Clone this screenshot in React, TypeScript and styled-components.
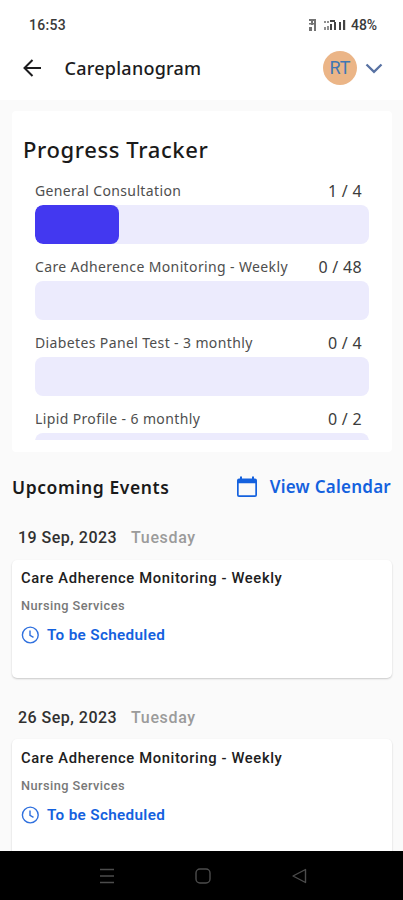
import React from "react";
import styled, { createGlobalStyle } from "styled-components";

const Global = createGlobalStyle`
  * { box-sizing: border-box; }
  html, body { margin: 0; padding: 0; }
  body { background: #fafafa; overflow: hidden; }
`;

const noto = `"Noto Sans", "Open Sans", sans-serif`;
const roboto = `Roboto, "Liberation Sans", sans-serif`;
const blue = "#1461de";

const Screen = styled.div`
  width: 403px;
  height: 900px;
  display: flex;
  flex-direction: column;
  background: #fafafa;
  overflow: hidden;
  font-family: ${noto};
  white-space: nowrap;
`;

const StatusBar = styled.div`
  flex: none;
  height: 50px;
  padding: 0 26px 0 29px;
  display: flex;
  align-items: center;
  justify-content: space-between;
  background: #fff;
  color: #3a3a3a;
  font: 500 14px/20px ${roboto};
`;

const Time = styled.span`
  letter-spacing: 0.3px;
`;

const StatusIcons = styled.div`
  display: flex;
  align-items: center;
  gap: 5px;
  letter-spacing: -0.1px;
`;

const Header = styled.header`
  flex: none;
  height: 50px;
  padding: 0 20px 14px 20px;
  display: flex;
  align-items: center;
  background: #fff;
`;

const Title = styled.h1`
  margin: 0 auto 0 19.5px;
  font: 500 18px/24px ${noto};
  letter-spacing: 0.25px;
  color: #1c1c1e;
`;

const Avatar = styled.div`
  width: 34px;
  height: 34px;
  margin-right: 8px;
  border-radius: 50%;
  display: flex;
  align-items: center;
  justify-content: center;
  background: #ebb587;
  color: #3f77b4;
  font: 400 18px/34px ${roboto};
`;

const TrackerCard = styled.section`
  flex: none;
  height: 341px;
  margin: 11px 11px 0 12px;
  padding: 23px 23px 12px 11px;
  display: flex;
  flex-direction: column;
  background: #fff;
  border-radius: 4px;
`;

const TrackerTitle = styled.h2`
  margin: 0;
  font: 500 22px/30px ${noto};
  letter-spacing: 0.6px;
  color: #1a1a1a;
`;

const TrackerList = styled.div`
  flex: 1;
  min-height: 0;
  padding-left: 12px;
  padding-top: 17px;
  overflow: hidden;
`;

const TrackerItem = styled.div`
  height: 76px;
`;

const TrackerLabel = styled.div`
  height: 24px;
  padding-right: 7px;
  display: flex;
  align-items: flex-start;
  justify-content: space-between;
  line-height: 20px;
`;

const ItemName = styled.span`
  font-size: 14px;
  letter-spacing: 0.37px;
  color: #4e4e4e;
`;

const ItemCount = styled.span`
  font-size: 16px;
  letter-spacing: 0.3px;
  color: #3c3c3c;
`;

const Track = styled.div`
  height: 39px;
  border-radius: 8px;
  background: #ecebfd;
  overflow: hidden;
`;

const Fill = styled.div`
  height: 100%;
  border-radius: 8px;
  background: #4338f0;
`;

const SectionBar = styled.div`
  flex: none;
  height: 34px;
  margin-top: 18px;
  padding: 0 12px;
  display: flex;
  align-items: center;
  justify-content: space-between;
`;

const SectionTitle = styled.h2`
  margin: 0;
  font: 600 17.5px/24px ${noto};
  letter-spacing: 0.6px;
  color: #1a1a1a;
`;

const CalendarLink = styled.a`
  display: flex;
  align-items: center;
  gap: 12px;
  font: 600 17px/24px ${noto};
  letter-spacing: 0.25px;
  color: ${blue};
`;

const Feed = styled.div`
  flex: 1;
  min-height: 0;
  overflow: hidden;
`;

const EventGroup = styled.section`
  height: 179.6px;
  padding: 23px 11px 0 12px;
`;

const DateRow = styled.div`
  height: 32.8px;
  padding-left: 6px;
  display: flex;
  gap: 14px;
  font: 500 16px/22px ${roboto};
  letter-spacing: 0.48px;
  color: #303030;
`;

const Weekday = styled.span`
  letter-spacing: 0.65px;
  color: #9b9b9b;
`;

const EventCard = styled.article`
  height: 118.4px;
  padding: 8.2px 9px 0;
  background: #fff;
  border-radius: 5px;
  box-shadow: 0 1px 2px rgba(0, 0, 0, 0.2);
  font-family: ${roboto};
`;

const EventName = styled.div`
  font-weight: 500;
  font-size: 14.75px;
  line-height: 20px;
  letter-spacing: 0.62px;
  color: #202020;
`;

const EventKind = styled.div`
  margin-top: 9px;
  font-weight: 500;
  font-size: 12.75px;
  line-height: 18px;
  letter-spacing: 0.45px;
  color: #787878;
`;

const EventState = styled.div`
  margin-top: 10px;
  display: flex;
  align-items: center;
  gap: 8px;
  font-weight: 600;
  font-size: 15.25px;
  line-height: 20px;
  letter-spacing: 0.34px;
  color: ${blue};
`;

const NavBar = styled.nav`
  flex: none;
  height: 49px;
  padding: 0 93px 0 97px;
  display: flex;
  align-items: center;
  justify-content: space-between;
  background: #000;

  svg:nth-child(2) {
    margin-right: 1px;
  }
`;

const Signal = () => (
  <svg width="38" height="14" viewBox="0 0 38 14" fill="#444">
    <path d="M1 1h7v2h-7zM1 5h7v1.5h-7zM1 9h3v4h-3zM6 1h2v12h-2zM3 3h2v4h-2z" fillOpacity=".75" />
    <path d="M22 2h5v2h-5zM22 6h2v6h-2zM26 4h2v8h-2zM31 4h2v8h-2zM35 2h2.2v10h-2.2z" />
    <path d="M16 3h2v2h-2zM16 9h2v3h-2zM19 8h2v4h-2zM19 3h2v2h-2z" fillOpacity=".6" />
  </svg>
);

const BackArrow = () => (
  <svg width="25" height="24" viewBox="0 0 25 24" fill="none" stroke="#1c1c1e" strokeWidth="2">
    <path d="M21 12H4.5M12.5 4L4.5 12L12.5 20" />
  </svg>
);

const Chevron = () => (
  <svg width="18" height="12" viewBox="0 0 18 12" fill="none" stroke="#5872a3" strokeWidth="2.3">
    <path d="M1.5 2.5L9 9.8L16.5 2.5" />
  </svg>
);

const CalendarIcon = () => (
  <svg width="22" height="22" viewBox="0 0 22 22">
    <path
      d="M4 .5h2V2.5h10V.5h2V2.5h1a2 2 0 0 1 2 2v14.5a2 2 0 0 1-2 2H3a2 2 0 0 1-2-2V4.5a2 2 0 0 1 2-2h1zM2.7 7.3v12h16.600V7.3z"
      fill={blue}
      fillRule="evenodd"
    />
  </svg>
);

const ClockIcon = () => (
  <svg width="18" height="18" viewBox="0 0 18 18" fill="none" stroke="#2f70de" strokeWidth="1.4">
    <circle cx="9.3" cy="9" r="7.9" />
    <path d="M9 4.6v4.8l3.5 2" />
  </svg>
);

const RecentsIcon = () => (
  <svg width="20" height="18" viewBox="0 0 20 18" stroke="#4c4c4c" strokeWidth="1.4">
    <path d="M3 2.5h14M3 9h14M3 15.5h14" />
  </svg>
);

const HomeIcon = () => (
  <svg width="18" height="18" viewBox="0 0 18 18" fill="none" stroke="#4c4c4c" strokeWidth="1.4">
    <rect x="2" y="2" width="14" height="14" rx="4" />
  </svg>
);

const BackIcon = () => (
  <svg width="20" height="18" viewBox="0 0 20 18" fill="none" stroke="#4c4c4c" strokeWidth="1.4" strokeLinejoin="round">
    <path d="M15.5 2.5v13L3 9z" />
  </svg>
);

const items = [
  { name: "General Consultation", done: 1, total: 4 },
  { name: "Care Adherence Monitoring - Weekly", done: 0, total: 48 },
  { name: "Diabetes Panel Test - 3 monthly", done: 0, total: 4 },
  { name: "Lipid Profile - 6 monthly", done: 0, total: 2 },
];

const events = [
  { date: "19 Sep, 2023", day: "Tuesday" },
  { date: "26 Sep, 2023", day: "Tuesday" },
];

export default function App() {
  return (
    <>
      <Global />
      <Screen>
        <StatusBar>
          <Time>16:53</Time>
          <StatusIcons>
            <Signal />
            <span>48%</span>
          </StatusIcons>
        </StatusBar>
        <Header>
          <BackArrow />
          <Title>Careplanogram</Title>
          <Avatar>RT</Avatar>
          <Chevron />
        </Header>
        <TrackerCard>
          <TrackerTitle>Progress Tracker</TrackerTitle>
          <TrackerList>
            {items.map((item) => (
              <TrackerItem key={item.name}>
                <TrackerLabel>
                  <ItemName>{item.name}</ItemName>
                  <ItemCount>
                    {item.done} / {item.total}
                  </ItemCount>
                </TrackerLabel>
                <Track>
                  {item.done > 0 && <Fill style={{ width: `${(item.done / item.total) * 100}%` }} />}
                </Track>
              </TrackerItem>
            ))}
          </TrackerList>
        </TrackerCard>
        <SectionBar>
          <SectionTitle>Upcoming Events</SectionTitle>
          <CalendarLink>
            <CalendarIcon />
            View Calendar
          </CalendarLink>
        </SectionBar>
        <Feed>
          {events.map((event) => (
            <EventGroup key={event.date}>
              <DateRow>
                <span>{event.date}</span>
                <Weekday>{event.day}</Weekday>
              </DateRow>
              <EventCard>
                <EventName>Care Adherence Monitoring - Weekly</EventName>
                <EventKind>Nursing Services</EventKind>
                <EventState>
                  <ClockIcon />
                  To be Scheduled
                </EventState>
              </EventCard>
            </EventGroup>
          ))}
        </Feed>
        <NavBar>
          <RecentsIcon />
          <HomeIcon />
          <BackIcon />
        </NavBar>
      </Screen>
    </>
  );
}
